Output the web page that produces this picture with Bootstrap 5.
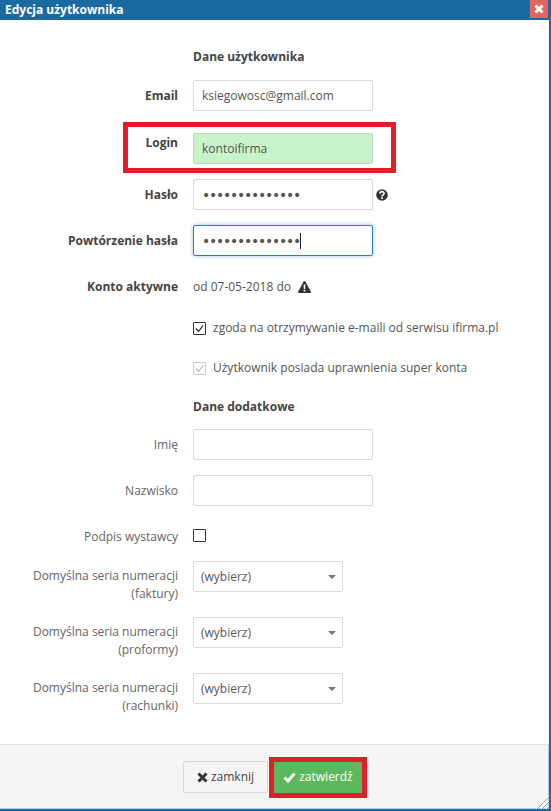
<!DOCTYPE html>
<html lang="pl">
<head>
  <meta charset="UTF-8" />
  <meta name="viewport" content="width=device-width, initial-scale=1.0" />
  <title>Edycja użytkownika</title>
  <link href="https://cdn.jsdelivr.net/npm/bootstrap@5.3.0/dist/css/bootstrap.min.css" rel="stylesheet" />
  <style>
    html, body { height: 811px; overflow: hidden; }
    body { font-family: "Open Sans", "Liberation Sans", sans-serif; font-size: 12px; color: #555; background: #fff; }
    .okno { width: 551px; height: 811px; display: flex; flex-direction: column; border-right: 2px solid #1a6aa2; border-bottom: 2px solid #1a6aa2; }
    .okno-naglowek { height: 20px; margin-right: -2px; background: #1a6aa2; color: #fff; font-weight: 700; font-size: 12px; padding-left: 5px; line-height: 20px; }
    .zamknij-x { width: 18px; height: 18px; margin-right: 3px; background: #e0655a; }
    .okno-tresc { flex: 1; padding-top: 28px; }
    .wiersz { display: flex; align-items: center; gap: 15px; position: relative; }
    .etykieta { width: 178px; flex: none; text-align: right; line-height: 18px; color: #666; }
    .etykieta-mocna { font-weight: 700; color: #444; }
    .sekcja { font-weight: 700; color: #444; line-height: 18px; margin-left: 193px; }
    .opcja { display: flex; align-items: center; gap: 7px; }
    .pole.form-control { width: 180px; height: 31px; padding: 0 8px; font-size: 12px; color: #555; border-color: #d9d9d9; border-radius: 2px; box-shadow: none; }
    .pole-zielone.form-control { background: #c8f2c9; border-color: #b5dcb6; }
    .pole-haslo.form-control { font-family: "DejaVu Sans", sans-serif; font-size: 14px; letter-spacing: -1.26px; }
    .pole-aktywne.form-control { border-color: #2a7fb8; box-shadow: 0 0 4px rgba(42,127,184,.45); }
    .karetka { position: absolute; left: 300px; top: 8px; width: 1px; height: 16px; background: #222; }
    .wybor.form-select { width: 150px; height: 31px; padding: 0 7px; font-size: 12px; color: #555; border-color: #d9d9d9; border-radius: 2px; box-shadow: none;
      background-image: url("data:image/svg+xml,%3csvg xmlns='http://www.w3.org/2000/svg' width='8' height='4'%3e%3cpath fill='%23777' d='M0 0h8L4 4z'/%3e%3c/svg%3e");
      background-size: 8px 4px; background-position: right 6px center; }
    .ptaszek.form-check-input { width: 13px; height: 13px; margin: 0; border: 1px solid #333; border-radius: 1px; flex: none; opacity: 1; background-color: #fff; }
    .ptaszek.form-check-input:checked { background-color: #fff; border-color: #333; background-size: 11px 11px;
      background-image: url("data:image/svg+xml,%3csvg xmlns='http://www.w3.org/2000/svg' viewBox='0 0 12 12'%3e%3cpath fill='none' stroke='%23333' stroke-width='1.3' d='M2 6l3 3 5-6.5'/%3e%3c/svg%3e"); }
    .ptaszek-szary.form-check-input:checked { border-color: #ccc;
      background-image: url("data:image/svg+xml,%3csvg xmlns='http://www.w3.org/2000/svg' viewBox='0 0 12 12'%3e%3cpath fill='none' stroke='%23bbb' stroke-width='1.3' d='M2 6l3 3 5-6.5'/%3e%3c/svg%3e"); }
    .okno-stopka { height: 65px; position: relative; background: #f5f5f5; border-top: 1px solid #e0e0e0; padding: 16px 3px 0 0; gap: 5px; box-shadow: inset -1px -1px 0 #a9d3ec; }
    .przycisk.btn { height: 32px; padding: 0; font-size: 12px; border-radius: 2px; display: flex; align-items: center; justify-content: center; gap: 3px; }
    .przycisk-zamknij.btn { width: 85px; background: #f5f5f5; border: 1px solid #d9d9d9; color: #444; }
    .przycisk-zatwierdz.btn { width: 90px; background: #5cb85c; border: 1px solid #5cb85c; color: #fff; }
    .ramka-czerwona { position: absolute; border: 5px solid #e81b2b; pointer-events: none; }
    .ramka-login { left: 123px; right: 153px; top: -11px; bottom: -9px; }
    .ramka-przycisk { left: -4px; right: -4px; top: -4px; bottom: -5px; }
    .uchwyt { position: absolute; right: 0; bottom: 0; }
  </style>
</head>
<body>
  <div class="okno">
    <!-- Naglowek -->
    <div class="okno-naglowek d-flex justify-content-between">
      <span>Edycja użytkownika</span>
      <span class="zamknij-x d-flex align-items-center justify-content-center">
        <svg width="10" height="10" viewBox="0 0 10 10"><path stroke="#fff" stroke-width="3" d="M1.5 1.5l7 7M8.5 1.5l-7 7" /></svg>
      </span>
    </div>

    <div class="okno-tresc">
      <div class="sekcja">Dane użytkownika</div>

      <div class="wiersz" style="margin-top:14px">
        <div class="etykieta etykieta-mocna">Email</div>
        <input class="form-control pole" value="ksiegowosc@gmail.com" />
      </div>

      <div class="wiersz" style="margin-top:22px">
        <div class="etykieta etykieta-mocna" style="margin-top:-11px">Login</div>
        <input class="form-control pole pole-zielone" value="kontoifirma" />
        <div class="ramka-czerwona ramka-login"></div>
      </div>

      <div class="wiersz" style="margin-top:15px">
        <div class="etykieta etykieta-mocna">Hasło</div>
        <input class="form-control pole pole-haslo" type="password" value="abcdefghijklmn" />
        <svg style="margin-left:-12px" width="12" height="12" viewBox="0 0 12 12"><circle cx="6" cy="6" r="5.8" fill="#333" /><path fill="none" stroke="#fff" stroke-width="1.6" d="M3.9 4.6c0-2.6 4.2-2.6 4.2-.2 0 1.5-2.1 1.5-2.1 3" /><rect x="5.1" y="8.2" width="1.8" height="1.7" fill="#fff" /></svg>
      </div>

      <div class="wiersz" style="margin-top:15px">
        <div class="etykieta etykieta-mocna">Powtórzenie hasła</div>
        <input class="form-control pole pole-haslo pole-aktywne" type="password" value="abcdefghijklmn" />
        <span class="karetka"></span>
      </div>

      <div class="wiersz" style="margin-top:22px">
        <div class="etykieta etykieta-mocna">Konto aktywne</div>
        <div class="opcja">
          <span>od 07-05-2018 do</span>
          <svg width="13" height="12" viewBox="0 0 13 12"><path fill="#333" d="M6.5 0c.4 0 .7.2.9.5l5.4 10c.3.6-.1 1.5-.9 1.5H1.1c-.8 0-1.2-.9-.9-1.5L5.6.5C5.8.2 6.1 0 6.5 0z" /><path fill="#fff" d="M5.6 3.6h1.8l-.2 4.4H5.8zM5.7 8.8h1.6v1.6H5.7z" /></svg>
        </div>
      </div>

      <div class="wiersz" style="margin-top:23px">
        <div class="etykieta"></div>
        <div class="opcja">
          <input class="form-check-input ptaszek" type="checkbox" checked />
          <span>zgoda na otrzymywanie e-maili od serwisu ifirma.pl</span>
        </div>
      </div>

      <div class="wiersz" style="margin-top:22px">
        <div class="etykieta"></div>
        <div class="opcja">
          <input class="form-check-input ptaszek ptaszek-szary" type="checkbox" checked disabled />
          <span>Użytkownik posiada uprawnienia super konta</span>
        </div>
      </div>

      <div class="sekcja" style="margin-top:21px">Dane dodatkowe</div>

      <div class="wiersz" style="margin-top:13px">
        <div class="etykieta">Imię</div>
        <input class="form-control pole" />
      </div>

      <div class="wiersz" style="margin-top:15px">
        <div class="etykieta">Nazwisko</div>
        <input class="form-control pole" />
      </div>

      <div class="wiersz" style="margin-top:22px">
        <div class="etykieta">Podpis wystawcy</div>
        <input class="form-check-input ptaszek" type="checkbox" style="margin-top:-3px" />
      </div>

      <div class="wiersz align-items-start" style="margin-top:15px">
        <div class="etykieta" style="margin-top:6px">Domyślna seria numeracji (faktury)</div>
        <select class="form-select wybor"><option>(wybierz)</option></select>
      </div>

      <div class="wiersz align-items-start" style="margin-top:14px">
        <div class="etykieta" style="margin-top:6px">Domyślna seria numeracji (proformy)</div>
        <select class="form-select wybor"><option>(wybierz)</option></select>
      </div>

      <div class="wiersz align-items-start" style="margin-top:14px">
        <div class="etykieta" style="margin-top:6px">Domyślna seria numeracji (rachunki)</div>
        <select class="form-select wybor"><option>(wybierz)</option></select>
      </div>
    </div>

    <!-- Stopka -->
    <div class="okno-stopka d-flex justify-content-center align-items-start">
      <button class="btn przycisk przycisk-zamknij" type="button">
        <svg width="11" height="11" viewBox="0 0 11 11"><path stroke="#333" stroke-width="3" d="M1.5 1.5l8 8M9.5 1.5l-8 8" /></svg>
        zamknij
      </button>
      <div class="position-relative">
        <button class="btn przycisk przycisk-zatwierdz" type="button">
          <svg width="13" height="11" viewBox="0 0 13 11"><path fill="none" stroke="#fff" stroke-width="3" d="M1.5 5.5l3.5 3.5 6.5-7.5" /></svg>
          zatwierdź
        </button>
        <div class="ramka-czerwona ramka-przycisk"></div>
      </div>
      <svg class="uchwyt" width="13" height="13" viewBox="0 0 13 13"><path fill="none" stroke="#fff" d="M0 13L13 0M5 13l8-8M10 13l3-3" /><path fill="none" stroke="#999" d="M1 13L13 1M6 13l7-7M11 13l2-2" /></svg>
    </div>
  </div>

  <script src="https://cdn.jsdelivr.net/npm/bootstrap@5.3.0/dist/js/bootstrap.bundle.min.js"></script>
</body>
</html>
